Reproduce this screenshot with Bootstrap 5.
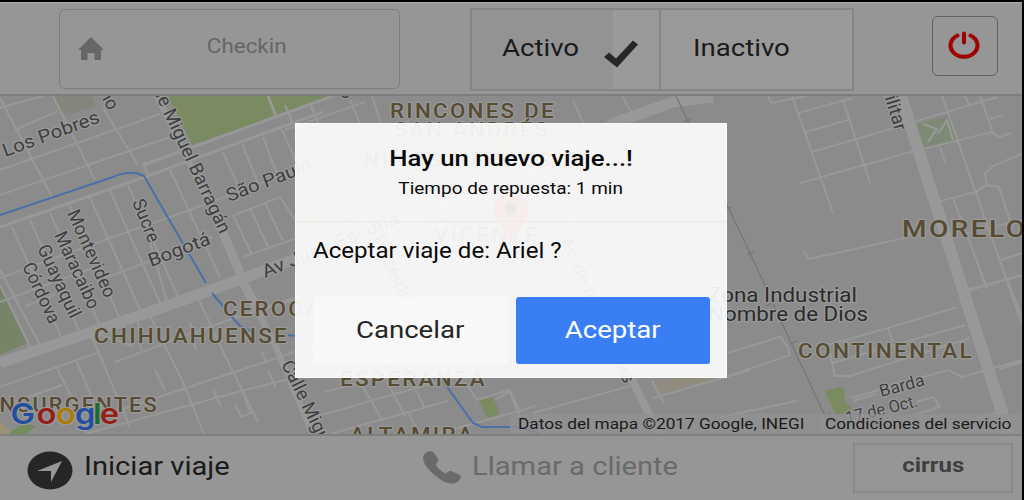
<!DOCTYPE html>
<html lang="es">
<head>
    <meta charset="UTF-8">
    <meta name="viewport" content="width=device-width, initial-scale=1.0">
    <title>Checkin</title>
    <link href="https://cdn.jsdelivr.net/npm/bootstrap@5.3.0/dist/css/bootstrap.min.css" rel="stylesheet">
    <style>
        body { background: #000; font-family: Roboto, "Liberation Sans", sans-serif; color: #1a1a1a; overflow: hidden; }
        .screen { width: 1022px; height: 500px; padding-top: 2px; }
        .topbar { height: 94px; background: #969696; border-top: 1px solid #adadad; border-bottom: 2px solid #7d7d7d; padding: 5px 24px 0 59px; }
        .bottombar { height: 66px; background: #969696; border-top: 2px solid #7f7f7f; padding: 7px 9px 0 27px; }
        .wide { display: inline-block; white-space: nowrap; line-height: 1; transform: scaleX(1.17); }
        .wide-start { transform-origin: 0 50%; }

        .btn-checkin { width: 341px; height: 80px; margin-top: 1px; border: 1px solid #7d7d7d; border-radius: 6px; color: #666; font-size: 19.5px; padding: 0 18px 4px; }
        .btn-checkin svg { flex: none; margin-top: 3px; }
        .btn-checkin .wide { margin-left: 8px; transform: scaleX(1.15); }
        .status-group { width: 385px; height: 83px; margin-left: 70px; border: 2px solid #858585; background: #9a9a9a; font-size: 24px; }
        .status-group .wide { margin-bottom: 4px; transform: scaleX(1.15); }
        .status-on { width: 189px; border-right: 2px solid #858585; background: linear-gradient(90deg, #939393 141px, #9a9a9a 141px); padding-left: 30px; }
        .status-on svg { margin-top: 8px; margin-right: 18px; }
        .status-off { padding-left: 32px; }
        .btn-power { width: 66px; height: 60px; margin: 8px 0 0 78px; border: 1px solid #616161; border-radius: 6px; padding: 0 2px 2px 0; }

        .map { height: 338px; background: #8b8b8b; }
        .map svg.tiles { display: block; }
        .streets { fill: none; stroke: #989898; stroke-width: 2.200; stroke-linejoin: round; }
        .halo text { paint-order: stroke; stroke: #999; stroke-width: 2.5px; stroke-linejoin: round; }
        .district { fill: #574b32; font-weight: 500; font-size: 19.5px; }
        .street { fill: #3e3e3e; font-size: 18.5px; }
        .place { fill: #2b2b2b; font-size: 19.5px; }
        .map-logo { font-family: Inter, Roboto, sans-serif; font-size: 29px; font-weight: 600; }
        .map-credits { height: 20px; font-size: 15px; background: rgba(145, 145, 145, .75); }
        .map-credits .wide { transform: scaleX(1.15); }
        .credit-data { width: 308px; padding-left: 8px; border-right: 1px solid #8a8a8a; }
        .credit-terms { width: 204px; padding-left: 7px; }

        .trip-dialog { left: 295px; top: 123px; width: 432px; height: 255px; background: rgba(253, 253, 253, .92); border: 1px solid #fbfbfb; color: #0a0a0a; }
        .trip-head { height: 98px; padding-top: 24px; border-bottom: 1px solid #e9e9e9; }
        .trip-title { font-size: 22px; font-weight: 500; }
        .trip-time { font-size: 16.5px; margin-top: 11px; }
        .trip-head .trip-time { transform: scaleX(1.15); }
        .trip-question { height: 75px; padding: 13px 0 0 17px; font-size: 21.5px; }
        .trip-question .wide { transform: scaleX(1.12); }
        .trip-actions { padding: 0 16px 0 17px; gap: 8px; }
        .trip-actions .btn { height: 67px; border: 0; border-radius: 3px; font-size: 24px; padding-bottom: 7px; }
        .trip-actions .wide { transform: scaleX(1.15); }
        .btn-cancel, .btn-cancel:hover { background: #f8f8f8; color: #262626; }
        .btn-accept, .btn-accept:hover { background: #397ef5; color: #fff; }

        .link-start { width: 396px; font-size: 26px; }
        .link-call { width: 430px; font-size: 26px; color: #6a6a6a; }
        .link-start .wide, .link-call .wide { margin: 2px 0 0 11px; transform: scaleX(1.12); }
        .btn-cirrus { width: 160px; height: 50px; border: 2px solid #898989; font-size: 21px; font-weight: 700; color: #3f3f3f; padding-bottom: 6px; }
        .btn-cirrus .wide { transform: scaleX(1.14); }
    </style>
</head>
<body>
    <div class="screen d-flex flex-column position-relative">
        <!-- Top bar -->
        <header class="topbar d-flex align-items-start">
            <div class="btn-checkin d-flex align-items-center">
                <svg width="26" height="23" viewBox="0 0 26 23"><path d="M13 0 26 13h-3v10h-6.500v-7H9.500v7H3V13H0z" fill="#666"/></svg>
                <div class="flex-grow-1 text-center"><span class="wide">Checkin</span></div>
            </div>
            <div class="status-group d-flex">
                <div class="status-on d-flex align-items-center">
                    <span class="wide wide-start">Activo</span>
                    <svg class="ms-auto" width="38" height="30" viewBox="0 0 38 30"><path d="M1 18l5-4.500 7 6L30 1.500l5 4L14 28.500z" fill="#262626"/></svg>
                </div>
                <div class="status-off d-flex align-items-center"><span class="wide wide-start">Inactivo</span></div>
            </div>
            <div class="btn-power d-flex align-items-center justify-content-center">
                <svg width="32" height="28" viewBox="0 0 32 28" fill="none" stroke="#a00000" stroke-width="4" stroke-linecap="round"><path d="M9.500 4.500A13.500 11.300 0 1 0 22.500 4.500M16 2.500v9"/></svg>
            </div>
        </header>

        <!-- Map -->
        <main class="map position-relative">
            <svg class="tiles" width="1022" height="338" viewBox="0 96 1022 338">
                <path d="M168 96l24 49 108-37 32-12z" fill="#7a8b62"/>
                <path d="M54 96l8 20 34-10-4-10z" fill="#85857c"/>
                <path d="M0 285l28 58-28 12z" fill="#768468"/>
                <path d="M0 421l14 13H0z" fill="#9b9276"/>
                <path d="M10 432l12-8 14 2-10 8H10z" fill="#768b5c"/>
                <path d="M911 125l38-9 8 25-37 8z" fill="#7c8a76"/>
                <path d="M825 391l15-4q5 0 5 8-3 4 2 8l6 7-17 6z" fill="#7a8b62"/>
                <path d="M478 400l15-3 6 14q0 6-11 7z" fill="#7a8b62"/>
                <path d="M655 383l57-14 4 9-56 17z" fill="#918c7e"/>
                <path d="M496 140l18-4 8 12-18 5zM308 216l16-4 6 13-15 6z" fill="#7a9a62"/>
                <g class="streets">
                    <path d="M0 98l52 99M53 96l42 84M103 108l35 57M143 162l5 13M0 108l43-12M15 130l43-19M0 170l160-56M0 195l185-63"/>
                    <path d="M0 227l145-50 178-65M143 165l157-57 60-22M268 96l8 20" stroke-width="3"/>
                    <path d="M12 227l51 114M30 220l51 115M50 213l51 115M70 206l51 115M90 198l52 116M110 191l52 116M128 185l52 116M148 235l20 70M170 170l50 107"/>
                    <path d="M0 278l110-40 80-28 110-42 120-44M235 215l45-18 15 23M100 280l113-43M0 302l100-37M26 306l30-12M243 257l57-20"/>
                    <path d="M223 152l17 38M242 144l16 39M263 137l15 40M282 130l18 40M233 215l19 40M250 208l18 39M265 203l18 38"/>
                    <path d="M0 387l97-34M0 407l62-22M57 368l25 50M77 362l20 48M92 337l38 90M98 334l35 12M150 316l32 64 22 54M198 298l30 64 30 60M115 362l48-18 37-14 100-34M233 318l67-20M120 410l60-20 97-32 50-18M85 434l145-40 70-18M155 370l10 20M213 390l8 16M190 322l6 28M262 352l5 12M268 370l8 18M138 322l3 28M235 404l6 13 10-4-6-14"/>
                    <path d="M0 285l30 62M0 270l40 75"/>
                    <path d="M157 96l66 137 24 57 28 55 38 90" stroke-width="6"/>
                    <path d="M223 233l24 57 12 22" stroke-width="9"/>
                    <path d="M0 363l147-50 100-36 70-26 210-76 90-53 56-20 40-5" stroke-width="11"/>
                    <path d="M560 180l16 68 60 140 24 48" stroke-width="8"/>
                    <path d="M285 105l70 160M310 104l75 170M350 100l80 190M372 96l18 55M285 130l80-28M300 160l110-40M300 240l200-70M310 270l240-84M320 310l210-78M440 180l40 100M490 170l50 130M573 100l17 38M622 96l14 24M530 260l80-30 24 25M540 290l180-60"/>
                    <path d="M325 392l110-30M315 417l80-23 60-17M330 434l118-33M363 387l20 34M387 382l18 34M410 378l15 30M409 413l10 21M465 382l12 18 32-10 12 30M495 399l13-6M500 397l10-6 10 22M533 413l97-27M653 398l97-28M652 381l12 22M713 357l67-20q8 8 10 18l-70 24M436 434l100-28"/>
                    <path d="M792 96l41 117M843 100l27 83M768 96l3 7 50-10M798 113l55-15M806 132l42-12M812 152l75-22 110-33M800 183l107-30 85-21M942 96l68 194 12 34M965 96l5 10M980 96l13 37 6 4 12-4M990 119l13-4M940 147l5 15M937 202l38-10 12-7 12 2 13 40M987 185l-2-11 8-8 29-12M953 198l34 90M1001 260l21-7M967 290l55-15M803 250l6 9 96-21M967 233l55-13M923 124l14 5-9 13M938 134l9-14 6 20"/>
                    <path d="M828 345l60-17 69-21M888 328l5 14M828 345l7 31 15 0 120-38M832 363l133-38M851 398l97-28 14 7 60-17M853 401l23-7M970 290l52-15M980 270l5 15M1003 270l19 47M917 402l16-5 7 10-27 8M720 417l77-16M973 420l23-7M1000 369l22-7"/>
                    <path d="M901 96l62 194 46 144" stroke-width="12"/>
                </g>
                <g fill="none" stroke="#4c6fa6" stroke-width="2">
                    <path d="M0 215l113-38q18-8 31-1l23 40 39 67M212 293l20 24 8 9 15 7M288 335l60 8 40 24 54 13 31 43 9 4 38 0 20 7"/>
                </g>
                <path d="M676 96l52 111 22 46 42 92 35 75M684 122l6-3M725 210l7-3M747 255l7-3M766 306l6-3M790 344l7-3M824 416l7-3" fill="none" stroke="#757575" stroke-width="1.200"/>

                <g class="halo">
                    <g class="district">
                        <text x="390" y="118" letter-spacing="2" textLength="166" lengthAdjust="spacingAndGlyphs">RINCONES DE</text>
                        <text x="394" y="137" letter-spacing="2" textLength="156" lengthAdjust="spacingAndGlyphs">SAN ANDRÉS</text>
                        <text x="363" y="167" letter-spacing="2" textLength="190" lengthAdjust="spacingAndGlyphs">NIÑOS HÉROES</text>
                        <text x="434" y="242" letter-spacing="2" textLength="106" lengthAdjust="spacingAndGlyphs">VICENTE</text>
                        <text x="223" y="316" letter-spacing="2" textLength="142" lengthAdjust="spacingAndGlyphs">CEROCAHUI</text>
                        <text x="94" y="343" letter-spacing="2" textLength="195" lengthAdjust="spacingAndGlyphs">CHIHUAHUENSE</text>
                        <text x="-9" y="412" letter-spacing="2" textLength="168" lengthAdjust="spacingAndGlyphs">INSURGENTES</text>
                        <text x="340" y="386" letter-spacing="2" textLength="147" lengthAdjust="spacingAndGlyphs">ESPERANZA</text>
                        <text x="350" y="442" letter-spacing="2" textLength="125" lengthAdjust="spacingAndGlyphs">ALTAMIRA</text>
                        <text x="798" y="358" letter-spacing="2" textLength="176" lengthAdjust="spacingAndGlyphs">CONTINENTAL</text>
                        <text x="902" y="237" font-size="23" letter-spacing="2" textLength="145" lengthAdjust="spacingAndGlyphs">MORELOS</text>
                    </g>
                    <g class="place">
                        <text x="708" y="302" textLength="149" lengthAdjust="spacingAndGlyphs">Zona Industrial</text>
                        <text x="708" y="321" textLength="160" lengthAdjust="spacingAndGlyphs">Nombre de Dios</text>
                    </g>
                    <g class="street">
                        <text transform="translate(5 157) rotate(-20)" textLength="102" lengthAdjust="spacingAndGlyphs">Los Pobres</text>
                        <text transform="translate(99 93) rotate(62)">ño</text>
                        <text transform="translate(155 95) rotate(65)" textLength="154" lengthAdjust="spacingAndGlyphs">le Miguel Barragán</text>
                        <text transform="translate(229 202) rotate(-21)" textLength="90" lengthAdjust="spacingAndGlyphs">São Paulo</text>
                        <text transform="translate(132 202) rotate(68)" textLength="45" lengthAdjust="spacingAndGlyphs">Sucre</text>
                        <text transform="translate(151 267) rotate(-21)" textLength="65" lengthAdjust="spacingAndGlyphs">Bogotá</text>
                        <text transform="translate(67 213) rotate(66)" textLength="94" lengthAdjust="spacingAndGlyphs">Montevideo</text>
                        <text transform="translate(54 235) rotate(65)" textLength="83" lengthAdjust="spacingAndGlyphs">Maracaibo</text>
                        <text transform="translate(37 248) rotate(65)" textLength="79" lengthAdjust="spacingAndGlyphs">Guayaquil</text>
                        <text transform="translate(22 266) rotate(65)" textLength="65" lengthAdjust="spacingAndGlyphs">Córdova</text>
                        <text transform="translate(265 278) rotate(-22)" textLength="146" lengthAdjust="spacingAndGlyphs">Av Juan Escutia</text>
                        <text transform="translate(372 238) rotate(65)" textLength="85" lengthAdjust="spacingAndGlyphs">Poseidon</text>
                        <text transform="translate(560 240) rotate(66)" textLength="158" lengthAdjust="spacingAndGlyphs">Av. de las Palomas</text>
                        <text transform="translate(281 364) rotate(64)" textLength="103" lengthAdjust="spacingAndGlyphs">Calle Miguel</text>
                        <text transform="translate(880 82) rotate(73)" textLength="52" lengthAdjust="spacingAndGlyphs">Militar</text>
                        <text transform="translate(881 397) rotate(-15)" font-size="17" textLength="46" lengthAdjust="spacingAndGlyphs">Barda</text>
                        <text transform="translate(847 424) rotate(-14)" font-size="17" textLength="74" lengthAdjust="spacingAndGlyphs">17 de Oct.</text>
                        <text x="340" y="98">o</text>
                    </g>
                    <text class="map-logo" transform="translate(10.500 424) scale(1.130 1)" x="0 23 40 57 73 79"><tspan fill="#234f9e">G</tspan><tspan fill="#941f19">o</tspan><tspan fill="#a97c0c">o</tspan><tspan fill="#234f9e">g</tspan><tspan fill="#1b6b32">l</tspan><tspan fill="#941f19">e</tspan></text>
                </g>

                <!-- Marker -->
                <path d="M511 248c-2-14-7-18-13-26-3-4-5-8-5-12a18 17 0 0 1 36 0c0 4-2 8-5 12-6 8-11 12-13 26z" fill="#a83226"/>
                <circle cx="511" cy="209" r="6" fill="#000"/>
            </svg>
            <div class="map-credits d-flex align-items-center position-absolute bottom-0 end-0">
                <div class="credit-data"><span class="wide wide-start">Datos del mapa ©2017 Google, INEGI</span></div>
                <div class="credit-terms"><span class="wide wide-start">Condiciones del servicio</span></div>
            </div>
        </main>

        <!-- Bottom bar -->
        <footer class="bottombar d-flex align-items-start">
            <div class="link-start d-flex align-items-start pt-2">
                <svg width="46" height="39" viewBox="0 0 46 39"><ellipse cx="23" cy="19.500" rx="22.500" ry="19" fill="#262626"/><path d="M35 10 24 31V20H10z" fill="#969696"/></svg>
                <span class="wide wide-start">Iniciar viaje</span>
            </div>
            <div class="link-call d-flex align-items-start pt-2">
                <svg width="38" height="33" viewBox="0 0 38 33"><path d="M2 2.500C5-.5 9-.5 11 2l4 6c1 2 0 3-2 5-.5 2 6 8.500 10 9.500 2-2 4-3 6-2l7 3c3 2 2 4-1 7-5 4-12 2-19-3C7 21 0 13 0 7c0-2 1-3 2-4.500z" fill="#6a6a6a"/></svg>
                <span class="wide wide-start">Llamar a cliente</span>
            </div>
            <div class="btn-cirrus d-flex align-items-center justify-content-center"><span class="wide">cirrus</span></div>
        </footer>

        <!-- New trip dialog -->
        <div class="trip-dialog position-absolute" role="dialog">
            <div class="trip-head d-flex flex-column align-items-center">
                <span class="wide trip-title">Hay un nuevo viaje...!</span>
                <span class="wide trip-time">Tiempo de repuesta: 1 min</span>
            </div>
            <div class="trip-question"><span class="wide wide-start">Aceptar viaje de: Ariel ?</span></div>
            <div class="trip-actions d-flex">
                <button type="button" class="btn btn-cancel flex-fill w-50"><span class="wide">Cancelar</span></button>
                <button type="button" class="btn btn-accept flex-fill w-50"><span class="wide">Aceptar</span></button>
            </div>
        </div>
    </div>

    <script src="https://cdn.jsdelivr.net/npm/bootstrap@5.3.0/dist/js/bootstrap.bundle.min.js"></script>
</body>
</html>
